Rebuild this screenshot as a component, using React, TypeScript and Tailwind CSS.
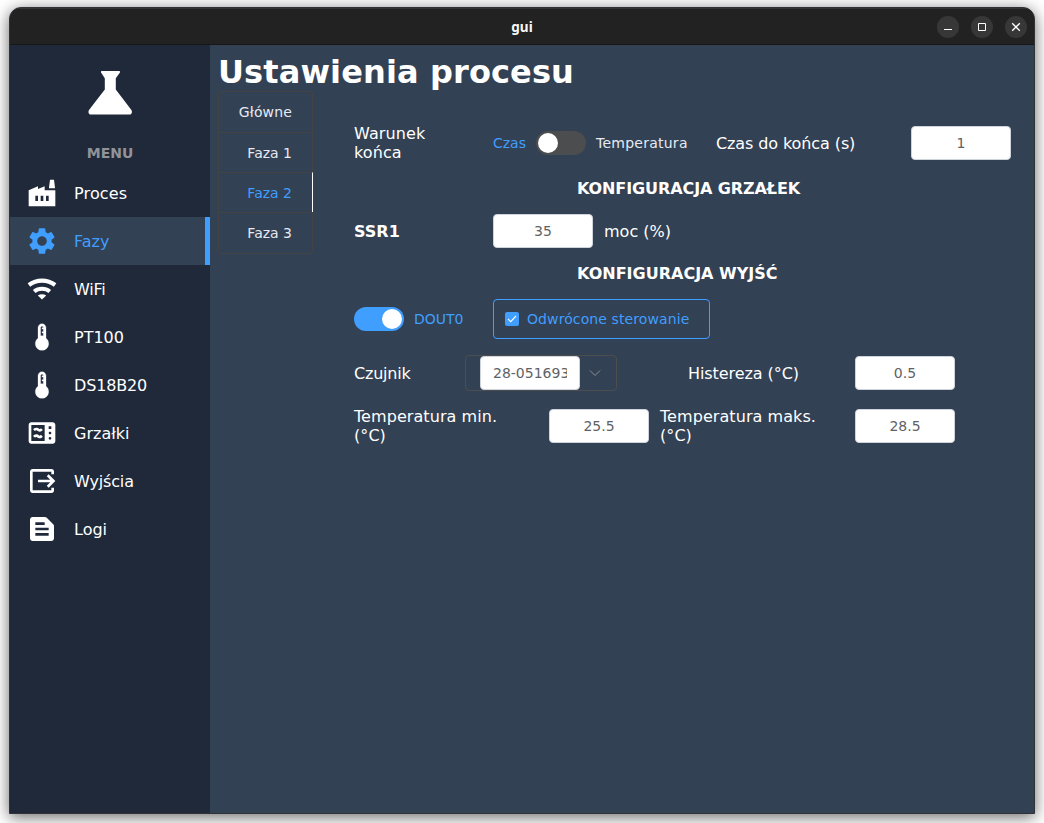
import type { ReactNode } from "react";
import { MdFactory, MdSettings, MdMicrowave, MdOutput, MdTextSnippet } from "react-icons/md";

function WifiIcon({ size }: { size: number }) {
  return (
    <svg width={size} height={size} viewBox="0 0 32 32" fill="none" stroke="currentColor" strokeWidth="4.1">
      <path d="M2.900 12C10.600 6.100 21.400 6.100 29.100 12" />
      <path d="M8.200 18.500C12.600 14.900 19.400 14.900 23.800 18.500" />
      <path d="M11.800 22.500C14.300 20.700 17.700 20.700 20.200 22.500L16 26.500z" fill="currentColor" stroke="none" />
    </svg>
  );
}

function ThermometerIcon({ size }: { size: number }) {
  return (
    <svg width={size} height={size} viewBox="0 0 24 24" fill="currentColor" stroke="currentColor" strokeWidth="0.2">
      <path d="M15 13V5c0-1.660-1.340-3-3-3S9 3.340 9 5v8c-1.210.91-2 2.370-2 4 0 2.760 2.240 5 5 5s5-2.240 5-5c0-1.630-.79-3.090-2-4zm-4-8c0-.55.45-1 1-1s1 .45 1 1h-1v1h1v2h-1v1h1v2h-2V5z" />
    </svg>
  );
}

type Icon = (props: { size: number }) => ReactNode;

const menu: { label: string; icon: Icon; active?: boolean; tracking?: string }[] = [
  { label: "Proces", icon: MdFactory, tracking: "tracking-[0.15px]" },
  { label: "Fazy", icon: MdSettings, active: true },
  { label: "WiFi", icon: WifiIcon, tracking: "tracking-[-0.25px]" },
  { label: "PT100", icon: ThermometerIcon },
  { label: "DS18B20", icon: ThermometerIcon, tracking: "tracking-[-0.15px]" },
  { label: "Grzałki", icon: MdMicrowave },
  { label: "Wyjścia", icon: MdOutput, tracking: "tracking-[-0.15px]" },
  { label: "Logi", icon: MdTextSnippet },
];

const tabs = ["Główne", "Faza 1", "Faza 2", "Faza 3"];

function WindowButton({ children }: { children: ReactNode }) {
  return (
    <div className="flex size-[22px] items-center justify-center rounded-full bg-[#373737]">
      <svg width="10" height="10" viewBox="0 0 10 10" fill="none" stroke="#fff">
        {children}
      </svg>
    </div>
  );
}

function TitleBar() {
  return (
    <div className="flex h-[37px] shrink-0 items-center border-t border-b border-t-[#353535] border-b-[#171717] bg-[#222222]">
      <div className="w-[100px]" />
      <div className="flex-1 pt-0.5 text-center font-['Noto_Sans',sans-serif] text-[13.5px] font-bold text-[#f7f7f7]">
        gui
      </div>
      <div className="flex w-[100px] justify-end gap-3 pr-[7px]">
        <WindowButton>
          <path d="M1 7.5h8" />
        </WindowButton>
        <WindowButton>
          <path d="M1.5 1.5h7v7h-7z" />
        </WindowButton>
        <WindowButton>
          <path d="M1.2 1.2l7.6 7.6M8.8 1.2L1.2 8.8" strokeWidth="1.3" />
        </WindowButton>
      </div>
    </div>
  );
}

function Sidebar() {
  return (
    <div className="flex w-[200px] shrink-0 flex-col bg-[#1f293a]">
      <div className="flex h-24 items-center justify-center">
        <svg width="44" height="44" viewBox="0 0 44 44" fill="#fff">
          <path d="M13.800 0h17.400c.9 0 1.100.9.600 1.700L27.800 7.300v11.200L43.200 38.800c1.500 2 .6 4.700-1.800 4.700H3c-2.400 0-3.300-2.700-1.800-4.700L16.800 18.500V7.300L13.200 1.700C12.700.9 12.900 0 13.800 0z" />
        </svg>
      </div>
      <div className="flex h-7 items-start justify-center pt-0.5 text-sm font-bold text-[#909399]">MENU</div>
      {menu.map(({ label, icon: Icon, active, tracking }) => (
        <div
          key={label}
          className={
            active
              ? "flex h-12 items-center gap-4 border-r-[5px] border-[#409eff] bg-[#334154] pl-4 text-[#409eff]"
              : "flex h-12 items-center gap-4 pl-4 text-white"
          }
        >
          <Icon size={32} />
          <span className={tracking ? `pt-0.5 ${tracking}` : "pt-0.5"}>{label}</span>
        </div>
      ))}
    </div>
  );
}

function Tabs() {
  return (
    <div className="flex w-[95px] shrink-0 flex-col self-start rounded-[3px] border border-[#434343] text-right text-sm leading-10 text-[#e5eaf3]">
      {tabs.map((tab) => (
        <div
          key={tab}
          className={
            tab === "Główne"
              ? "h-10 pr-5 tracking-[0.15px]"
              : tab === "Faza 2"
                ? "-mr-px h-10 border-t border-r border-t-[#434343] border-r-white pr-5 text-[#409eff]"
                : tab === "Faza 3"
                  ? "h-[41px] border-t border-[#434343] pr-5"
                  : "h-10 border-t border-[#434343] pr-5"
          }
        >
          {tab}
        </div>
      ))}
    </div>
  );
}

function NumberInput({ value }: { value: string }) {
  return (
    <div className="h-[34px] w-[100px] shrink-0 overflow-hidden rounded border border-[#cfd3dc] bg-white px-3 text-center text-sm leading-8 text-[#606266]">
      <div className="overflow-hidden whitespace-nowrap">{value}</div>
    </div>
  );
}

function Switch({ on }: { on?: boolean }) {
  return (
    <div
      className={
        on
          ? "flex h-6 w-[50px] shrink-0 items-center justify-end rounded-full bg-[#409eff] px-0.5"
          : "flex h-6 w-[50px] shrink-0 items-center rounded-full bg-[#4c4d4f] px-0.5"
      }
    >
      <div className="size-5 rounded-full bg-white" />
    </div>
  );
}

function PhaseForm() {
  return (
    <div className="ml-[41px] flex flex-1 flex-col pt-[30px] leading-[19px] text-white">
      <div className="flex h-[44px] items-center">
        <div className="w-[139px] pr-14 tracking-[0.1px]">Warunek końca</div>
        <div className="flex w-[223px] items-center text-sm">
          <span className="w-[43px] text-[#409eff]">Czas</span>
          <Switch />
          <span className="ml-[10px] tracking-[0.25px] text-[#e5eaf3]">Temperatura</span>
        </div>
        <div className="w-[195px] tracking-[-0.1px]">Czas do końca (s)</div>
        <NumberInput value="1" />
      </div>
      <div className="flex h-[46px] items-center pl-[223px] font-bold tracking-[-0.1px]">KONFIGURACJA GRZAŁEK</div>
      <div className="flex h-10 items-center">
        <div className="w-[139px] font-bold">SSR1</div>
        <NumberInput value="35" />
        <div className="pl-[11px]">moc (%)</div>
      </div>
      <div className="flex h-[44px] items-center pl-[223px] font-bold">KONFIGURACJA WYJŚĆ</div>
      <div className="flex h-12 items-center text-sm text-[#409eff]">
        <div className="flex w-[139px] items-center gap-[10px]">
          <Switch on />
          <span>DOUT0</span>
        </div>
        <div className="flex h-10 w-[217px] items-center gap-2 rounded border border-[#409eff] pl-[11px]">
          <div className="flex size-3.5 items-center justify-center rounded-[2px] bg-[#409eff]">
            <svg width="10" height="8" viewBox="0 0 10 8" fill="none" stroke="#fff" strokeWidth="1.1">
              <path d="M1 4l2.700 2.600L9 1" />
            </svg>
          </div>
          <span className="tracking-[0.1px]">Odwrócone sterowanie</span>
        </div>
      </div>
      <div className="flex h-[60px] items-center">
        <div className="w-[111px] tracking-[-0.2px]">Czujnik</div>
        <div className="flex h-9 w-[152px] items-center rounded border border-[#4c4d4f] pl-3.5">
          <NumberInput value="28-0516935" />
          <svg className="ml-[9px]" width="12" height="8" viewBox="0 0 12 8" fill="none" stroke="#8b9098">
            <path d="M1 1.500l5 5 5-5" />
          </svg>
        </div>
        <div className="ml-[71px] w-[167px] tracking-[-0.07px]">Histereza (°C)</div>
        <NumberInput value="0.5" />
      </div>
      <div className="flex h-[46px] items-center">
        <div className="w-[195px] pr-10 tracking-[0.07px]">Temperatura min. (°C)</div>
        <NumberInput value="25.5" />
        <div className="ml-[11px] w-[195px] pr-8 tracking-[0.07px]">Temperatura maks. (°C)</div>
        <NumberInput value="28.5" />
      </div>
    </div>
  );
}

export default function App() {
  return (
    <div className="h-[823px] w-[1044px] overflow-hidden bg-white px-[9px] pt-[7px] font-['DejaVu_Sans',sans-serif] text-base">
      <div className="flex h-[807px] flex-col overflow-hidden rounded-t-xl border border-[#303236] bg-[#334154] shadow-[0_3px_16px_rgba(0,0,0,0.6)]">
        <TitleBar />
        <div className="flex min-h-0 flex-1">
          <Sidebar />
          <div className="flex flex-1 flex-col pl-2">
            <h1 className="h-[46px] text-[32px] leading-[55px] font-bold tracking-[0.12px] text-white">
              Ustawienia procesu
            </h1>
            <div className="flex">
              <Tabs />
              <PhaseForm />
            </div>
          </div>
        </div>
      </div>
    </div>
  );
}
